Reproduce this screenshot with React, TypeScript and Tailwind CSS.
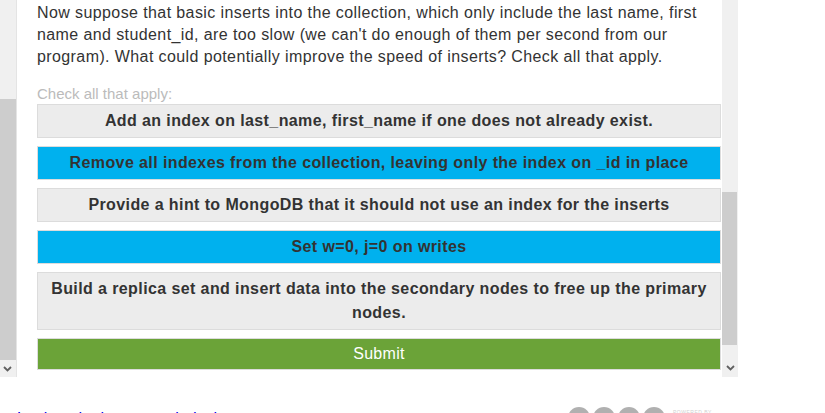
import React from "react";

const Chevron = () => (
  <svg width="9" height="6" viewBox="0 0 9 6" className="block">
    <path d="M1 1 L4.5 4.5 L8 1" fill="none" stroke="#606060" strokeWidth="1.8" />
  </svg>
);

const options: { text: string; selected: boolean }[] = [
  { text: "Add an index on last_name, first_name if one does not already exist.", selected: false },
  { text: "Remove all indexes from the collection, leaving only the index on _id in place", selected: true },
  { text: "Provide a hint to MongoDB that it should not use an index for the inserts", selected: false },
  { text: "Set w=0, j=0 on writes", selected: true },
  { text: "Build a replica set and insert data into the secondary nodes to free up the primary nodes.", selected: false },
];

export default function App() {
  return (
    <div className="w-[825px] h-[413px] overflow-hidden bg-white font-['Liberation_Sans',Arial,sans-serif]">
      <div className="flex h-[377px]">
        <div className="w-[17px] flex flex-col bg-[#f0f0f0] border-r border-[#e4e4e4]">
          <div className="h-[99px]" />
          <div className="flex-1 w-[16px] bg-[#cdcdcd]" />
          <div className="h-[17px] flex items-center justify-center pr-[1px]">
            <Chevron />
          </div>
        </div>
        <div className="w-[705px] pl-[20px] pr-[1px] pt-[2px]">
          <p className="text-[16px] leading-[22px] tracking-[0.4px] text-[#333]">
            Now suppose that basic inserts into the collection, which only include the last name, first name and student_id, are too slow (we can't do enough of them per second from our program). What could potentially improve the speed of inserts? Check all that apply.
          </p>
          <div className="mt-[17px] text-[15px] leading-[18px] text-[#bbbbbb]">Check all that apply:</div>
          <div className="mt-[1px] flex flex-col gap-[8px]">
            {options.map((o) => (
              <div
                key={o.text}
                className={
                  o.selected
                    ? "border border-[#dcdcdc] bg-[#00b1ee] py-[4px] px-[10px] text-center text-[16px] leading-[24px] tracking-[0.4px] font-bold text-[#333]"
                    : "border border-[#dcdcdc] bg-[#ececec] py-[4px] px-[10px] text-center text-[16px] leading-[24px] tracking-[0.4px] font-bold text-[#333]"
                }
              >
                {o.text}
              </div>
            ))}
            <div className="border border-[#dcdcdc] bg-[#6ba338] text-center text-[16px] leading-[30px] tracking-[0.3px] text-white">
              Submit
            </div>
          </div>
        </div>
        <div className="w-[16px] flex flex-col bg-[#f0f0f0]">
          <div className="h-[192px]" />
          <div className="flex-1 w-[15px] bg-[#cdcdcd]" />
          <div className="h-[32px] flex items-center justify-center pt-[14px]">
            <Chevron />
          </div>
        </div>
      </div>
      <div className="flex items-start h-[36px]">
        <div className="pl-[17px] pt-[33px] text-[16px] leading-[18px] text-[#0000ee] w-[550px]">
          <span>Look at the lecture on indexing</span>
        </div>
        <div className="ml-[18px] pt-[30px] flex gap-[3px]">
          <div className="w-[22px] h-[22px] rounded-full bg-[#b0b0b0]" />
          <div className="w-[22px] h-[22px] rounded-full bg-[#b0b0b0]" />
          <div className="w-[22px] h-[22px] rounded-full bg-[#b0b0b0]" />
          <div className="w-[22px] h-[22px] rounded-full bg-[#b0b0b0]" />
        </div>
        <div className="ml-[8px] pt-[32px] text-[5px] leading-[6px] text-[#d0d0d0] tracking-[0.5px]">POWERED BY</div>
        <div className="ml-[20px] pt-[34px] text-[8px] leading-[8px] text-[#bbb]">▪▪</div>
      </div>
    </div>
  );
}
